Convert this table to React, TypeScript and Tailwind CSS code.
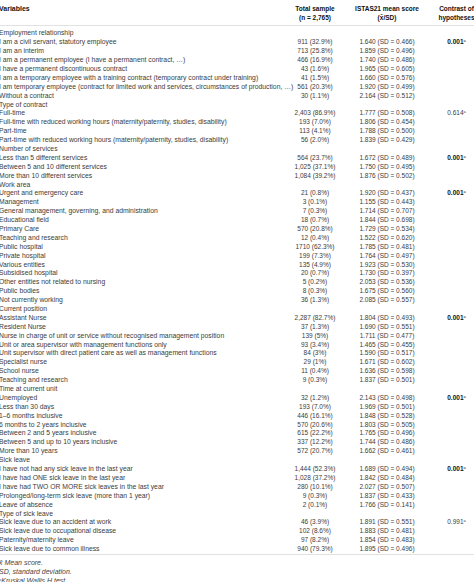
import React from "react";

type Row = { label: string; n?: string; m?: string; p?: string; bold?: boolean };

const rows: Row[] = [
  { label: "Employment relationship" },
  { label: "I am a civil servant, statutory employee", n: "911 (32.9%)", m: "1.640 (SD = 0.466)", p: "0.001", bold: true },
  { label: "I am an interim", n: "713 (25.8%)", m: "1.859 (SD = 0.496)" },
  { label: "I am a permanent employee (I have a permanent contract, …)", n: "466 (16.9%)", m: "1.740 (SD = 0.486)" },
  { label: "I have a permanent discontinuous contract", n: "43 (1.6%)", m: "1.965 (SD = 0.605)" },
  { label: "I am a temporary employee with a training contract (temporary contract under training)", n: "41 (1.5%)", m: "1.660 (SD = 0.576)" },
  { label: "I am temporary employee (contract for limited work and services, circumstances of production, …)", n: "561 (20.3%)", m: "1.920 (SD = 0.499)" },
  { label: "Without a contract", n: "30 (1.1%)", m: "2.164 (SD = 0.512)" },
  { label: "Type of contract" },
  { label: "Full-time", n: "2,403 (86.9%)", m: "1.777 (SD = 0.508)", p: "0.614" },
  { label: "Full-time with reduced working hours (maternity/paternity, studies, disability)", n: "193 (7.0%)", m: "1.806 (SD = 0.454)" },
  { label: "Part-time", n: "113 (4.1%)", m: "1.788 (SD = 0.500)" },
  { label: "Part-time with reduced working hours (maternity/paternity, studies, disability)", n: "56 (2.0%)", m: "1.839 (SD = 0.429)" },
  { label: "Number of services" },
  { label: "Less than 5 different services", n: "564 (23.7%)", m: "1.672 (SD = 0.489)", p: "0.001", bold: true },
  { label: "Between 5 and 10 different services", n: "1,025 (37.1%)", m: "1.750 (SD = 0.495)" },
  { label: "More than 10 different services", n: "1,084 (39.2%)", m: "1.876 (SD = 0.502)" },
  { label: "Work area" },
  { label: "Urgent and emergency care", n: "21 (0.8%)", m: "1.920 (SD = 0.437)", p: "0.001", bold: true },
  { label: "Management", n: "3 (0.1%)", m: "1.155 (SD = 0.443)" },
  { label: "General management, governing, and administration", n: "7 (0.3%)", m: "1.714 (SD = 0.707)" },
  { label: "Educational field", n: "18 (0.7%)", m: "1.844 (SD = 0.698)" },
  { label: "Primary Care", n: "570 (20.8%)", m: "1.729 (SD = 0.534)" },
  { label: "Teaching and research", n: "12 (0.4%)", m: "1.522 (SD = 0.620)" },
  { label: "Public hospital", n: "1710 (62.3%)", m: "1.785 (SD = 0.481)" },
  { label: "Private hospital", n: "199 (7.3%)", m: "1.764 (SD = 0.497)" },
  { label: "Various entities", n: "135 (4.9%)", m: "1.923 (SD = 0.530)" },
  { label: "Subsidised hospital", n: "20 (0.7%)", m: "1.730 (SD = 0.397)" },
  { label: "Other entities not related to nursing", n: "5 (0.2%)", m: "2.053 (SD = 0.536)" },
  { label: "Public bodies", n: "8 (0.3%)", m: "1.675 (SD = 0.560)" },
  { label: "Not currently working", n: "36 (1.3%)", m: "2.085 (SD = 0.557)" },
  { label: "Current position" },
  { label: "Assistant Nurse", n: "2,287 (82.7%)", m: "1.804 (SD = 0.493)", p: "0.001", bold: true },
  { label: "Resident Nurse", n: "37 (1.3%)", m: "1.690 (SD = 0.551)" },
  { label: "Nurse in charge of unit or service without recognised management position", n: "139 (5%)", m: "1.711 (SD = 0.477)" },
  { label: "Unit or area supervisor with management functions only", n: "93 (3.4%)", m: "1.465 (SD = 0.455)" },
  { label: "Unit supervisor with direct patient care as well as management functions", n: "84 (3%)", m: "1.590 (SD = 0.517)" },
  { label: "Specialist nurse", n: "29 (1%)", m: "1.671 (SD = 0.602)" },
  { label: "School nurse", n: "11 (0.4%)", m: "1.636 (SD = 0.598)" },
  { label: "Teaching and research", n: "9 (0.3%)", m: "1.837 (SD = 0.501)" },
  { label: "Time at current unit" },
  { label: "Unemployed", n: "32 (1.2%)", m: "2.143 (SD = 0.498)", p: "0.001", bold: true },
  { label: "Less than 30 days", n: "193 (7.0%)", m: "1.969 (SD = 0.501)" },
  { label: "1–6 months inclusive", n: "446 (16.1%)", m: "1.848 (SD = 0.528)" },
  { label: "6 months to 2 years inclusive", n: "570 (20.6%)", m: "1.803 (SD = 0.505)" },
  { label: "Between 2 and 5 years inclusive", n: "615 (22.2%)", m: "1.765 (SD = 0.496)" },
  { label: "Between 5 and up to 10 years inclusive", n: "337 (12.2%)", m: "1.744 (SD = 0.486)" },
  { label: "More than 10 years", n: "572 (20.7%)", m: "1.662 (SD = 0.461)" },
  { label: "Sick leave" },
  { label: "I have not had any sick leave in the last year", n: "1,444 (52.3%)", m: "1.689 (SD = 0.494)", p: "0.001", bold: true },
  { label: "I have had ONE sick leave in the last year", n: "1,028 (37.2%)", m: "1.842 (SD = 0.484)" },
  { label: "I have had TWO OR MORE sick leaves in the last year", n: "280 (10.1%)", m: "2.027 (SD = 0.507)" },
  { label: "Prolonged/long-term sick leave (more than 1 year)", n: "9 (0.3%)", m: "1.837 (SD = 0.433)" },
  { label: "Leave of absence", n: "2 (0.1%)", m: "1.766 (SD = 0.141)" },
  { label: "Type of sick leave" },
  { label: "Sick leave due to an accident at work", n: "46 (3.9%)", m: "1.891 (SD = 0.551)", p: "0.991" },
  { label: "Sick leave due to occupational disease", n: "102 (8.6%)", m: "1.883 (SD = 0.481)" },
  { label: "Paternity/maternity leave", n: "97 (8.2%)", m: "1.854 (SD = 0.483)" },
  { label: "Sick leave due to common illness", n: "940 (79.3%)", m: "1.895 (SD = 0.496)" },
];

export default function App() {
  return (
    <div className="w-[474px] h-[582px] overflow-hidden bg-white text-[#3c3c3c] text-[6.5px] font-['Liberation_Sans',Arial,sans-serif]">
      <div className="w-[484px] ml-[-1px]">
        <div className="flex pt-[3.5px] pb-[2px] leading-[9.7px] font-bold text-[#111] border-b border-[#e2e2e2]">
          <div className="w-[287px] text-[7px]">Variables</div>
          <div className="w-[58px] text-center">
            <div>Total sample</div>
            <div>(n = 2,765)</div>
          </div>
          <div className="w-[86px] text-center">
            <div>ISTAS21 mean score</div>
            <div>(x̄/SD)</div>
          </div>
          <div className="w-[53px] text-center whitespace-nowrap">
            <div>Contrast of</div>
            <div>hypotheses</div>
          </div>
        </div>
        <div className="pt-[3.5px] pb-[0.5px] border-b border-[#e2e2e2]">
          {rows.map((r, i) => (
            <div key={i} className="flex h-[8.9px] leading-[8.9px] whitespace-nowrap">
              <div className="w-[287px] overflow-visible text-[6.8px]">{r.label}</div>
              <div className="w-[58px] text-center">{r.n}</div>
              <div className="w-[86px] text-center">{r.m}</div>
              <div className="w-[53px] text-center">
                {r.p && (
                  <span className={r.bold ? "font-bold text-[#111]" : ""}>
                    {r.p}
                    <sup className="text-[4px] font-normal">a</sup>
                  </span>
                )}
              </div>
            </div>
          ))}
        </div>
        <div className="pt-[4px] italic leading-[8.7px] text-[#444] text-[7px]">
          <div>x̄ Mean score.</div>
          <div>SD, standard deviation.</div>
          <div>
            <sup className="text-[4px]">a</sup>Kruskal Wallis H test
          </div>
        </div>
      </div>
    </div>
  );
}
